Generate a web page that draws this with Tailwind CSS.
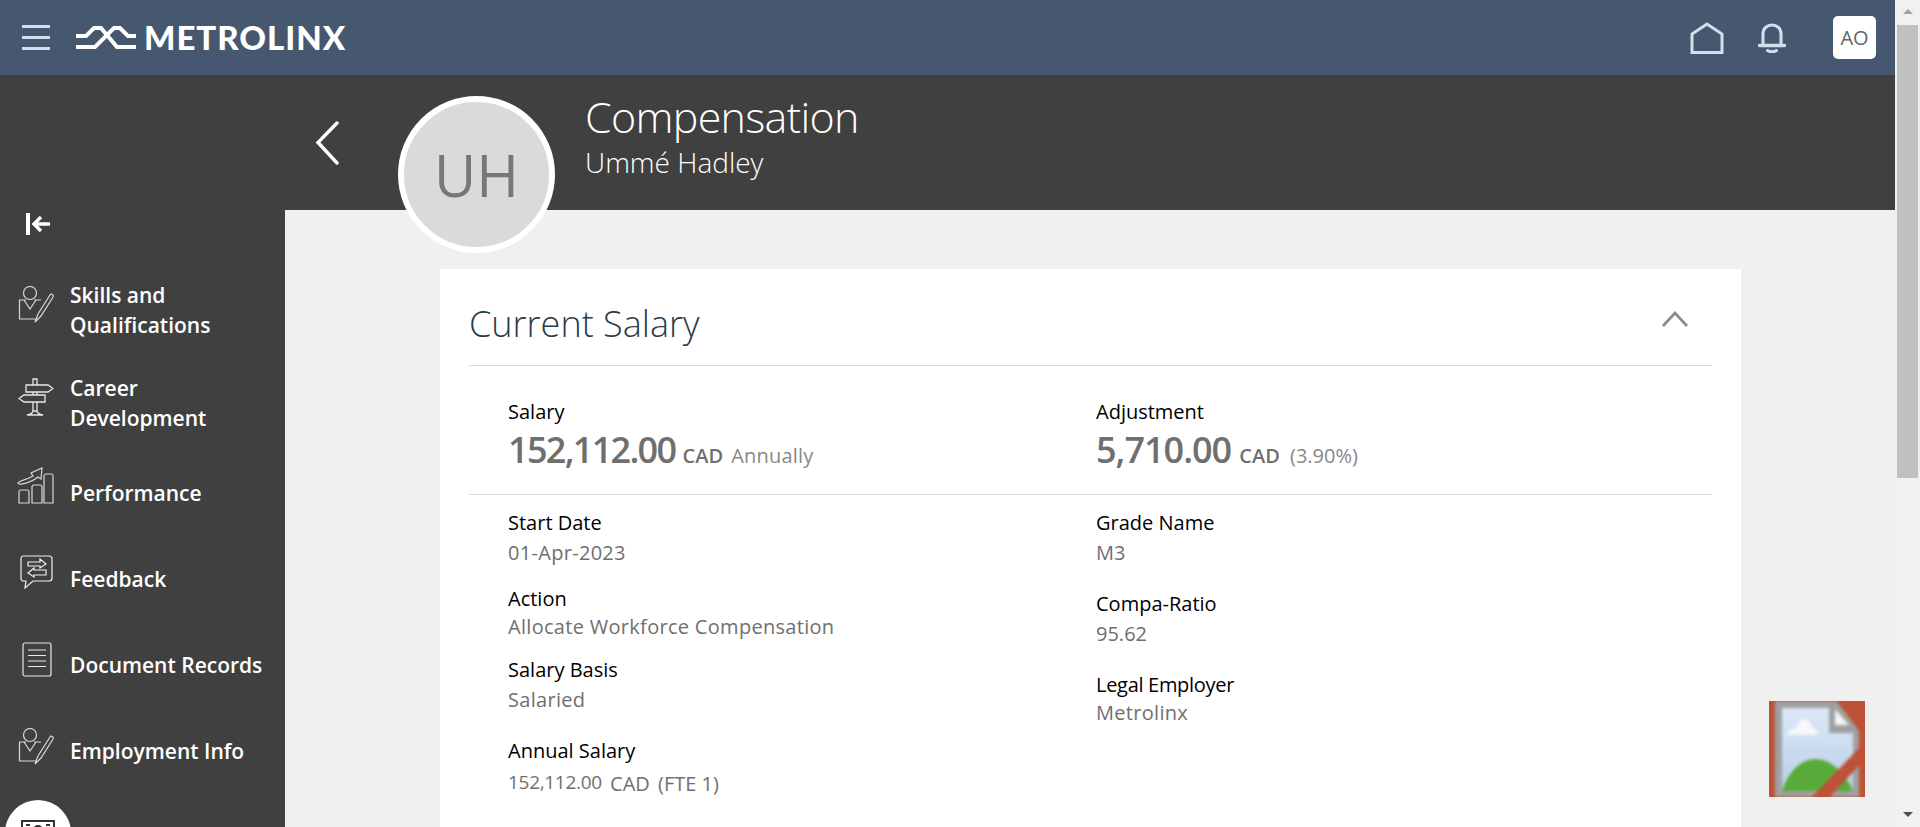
<!DOCTYPE html>
<html lang="en">
<head>
    <meta charset="UTF-8">
    <meta name="viewport" content="width=device-width, initial-scale=1.0">
    <title>Compensation</title>
    <script src="https://cdn.jsdelivr.net/npm/@tailwindcss/browser@4"></script>
</head>
<body class="h-screen overflow-hidden bg-[#f0f0f0] font-['Open_Sans','Noto_Sans',sans-serif]">
    <div class="flex h-[827px]">
        <div class="w-[1895px] h-full flex flex-col relative">
            <!-- Header -->
            <header class="h-[75px] shrink-0 bg-[#46586f] flex items-center">
                <button class="ml-[22px] w-[28px] flex flex-col gap-[8px]">
                    <span class="block h-[3px] bg-[#d3dfec]"></span>
                    <span class="block h-[3px] bg-[#d3dfec]"></span>
                    <span class="block h-[3px] bg-[#d3dfec]"></span>
                </button>
                <svg class="ml-[26px]" width="60" height="28" viewBox="0 0 60 28" fill="none" stroke="#fff" stroke-width="4">
                    <path d="M0 12H10L18 4H25L41 23H60"/>
                    <path d="M0 23H19L38 4H44L52 12H60"/>
                </svg>
                <span class="ml-[8px] text-[33px] leading-none font-black text-white font-['Lato',sans-serif] tracking-[1px]">METROLINX</span>
                <svg class="ml-auto" width="34" height="32" viewBox="0 0 34 32" fill="none" stroke="#d3dfec" stroke-width="3">
                    <path d="M2 30.5V12L17 2L32 12V30.5Z"/>
                </svg>
                <svg class="ml-[34px]" width="28" height="30" viewBox="0 0 28 30" fill="none" stroke="#d3dfec" stroke-width="3" stroke-linecap="round">
                    <path d="M5 21V11C5 5.5 9 2 14 2C19 2 23 5.5 23 11V21"/>
                    <path d="M1.5 22.5H26.5" stroke-width="3.4"/>
                    <path d="M9.5 27.5C12 29 16 29 18.5 27.5"/>
                </svg>
                <div class="ml-[47px] mr-[19px] w-[43px] h-[43px] rounded-[5px] bg-white text-[20px] text-[#666] flex items-center justify-center">AO</div>
            </header>

            <div class="flex-1 flex min-h-0">
                <!-- Sidebar -->
                <aside class="w-[285px] shrink-0 bg-[#404040] text-white relative overflow-hidden">
                    <svg class="absolute left-[26px] top-[137px]" width="25" height="24" viewBox="0 0 25 24" fill="none" stroke="#fff">
                        <path d="M2 1V23" stroke-width="4"/>
                        <path d="M24 12H9M15 5L8 12L15 19" stroke-width="3.4"/>
                    </svg>
                    <nav class="pt-[189px] text-[21px] font-semibold leading-[30px]">
                        <a class="h-[92px] flex items-center gap-[16px] pl-[18px]">
                            <svg class="shrink-0 -mt-[11px]" width="36" height="38" viewBox="0 0 36 38" fill="none" stroke="#d8d8d8" stroke-width="1.2">
                                <circle cx="12" cy="7" r="6.5"/>
                                <path d="M8 14H1.5V33H18M16 14H23M6 14L12 23L18 14"/>
                                <path d="M17 36L20 28L32 9C33 7 36 9 35 11L23 30Z"/>
                            </svg>
                            <span>Skills and<br>Qualifications</span>
                        </a>
                        <a class="h-[94px] flex items-center gap-[16px] pl-[18px]">
                            <svg class="shrink-0 -mt-[13px]" width="36" height="38" viewBox="0 0 36 38" fill="none" stroke="#e8e8e8" stroke-width="1.3">
                                <path d="M15 7V1H19V7M15 14V17M19 14V17M15 24V33M19 24V33"/>
                                <path d="M8 7H30L35 10.5L30 14H8Z"/>
                                <path d="M6 17H27V24H6L1 20.5Z"/>
                                <path d="M9 37C13 36 15 35 15 33H19C19 35 21 36 25 37Z"/>
                            </svg>
                            <span>Career<br>Development</span>
                        </a>
                        <a class="h-[86px] flex items-center gap-[16px] pl-[17px]">
                            <svg class="shrink-0 -mt-[16px]" width="37" height="37" viewBox="0 0 37 37" fill="none" stroke="#d8d8d8" stroke-width="1.2">
                                <path d="M2 36V25C2 24 3 23 4 23H10C11 23 12 24 12 25V36Z"/>
                                <path d="M15 36V20C15 19 16 18 17 18H23C24 18 25 19 25 20V36Z"/>
                                <path d="M27 36V9C27 8 28 7 29 7H35C36 7 36 8 36 9V36Z"/>
                                <path d="M1 16C1 14 9 13 16 9L14 6L25 1L24 12L21 10C14 16 1 19 1 16Z"/>
                            </svg>
                            <span>Performance</span>
                        </a>
                        <a class="h-[86px] flex items-center gap-[17px] pl-[20px]">
                            <svg class="shrink-0 -mt-[14px]" width="33" height="34" viewBox="0 0 33 34" fill="none" stroke="#f0f0f0" stroke-width="1.2">
                                <path d="M3 1H29C31 1 32 2 32 4V23C32 25 31 26 29 26H13L5 33L6 26H3C2 26 1 25 1 23V4C1 2 2 1 3 1Z"/>
                                <path d="M8 7H20V4L26 9L20 13V11H8Z"/>
                                <path d="M26 15H14V13L8 18L14 22V20H26Z"/>
                            </svg>
                            <span>Feedback</span>
                        </a>
                        <a class="h-[86px] flex items-center gap-[19px] pl-[22px]">
                            <svg class="shrink-0 -mt-[12px]" width="30" height="35" viewBox="0 0 30 35" fill="none" stroke="#e8e8e8" stroke-width="1.2">
                                <rect x="1" y="1" width="28" height="33" rx="2"/>
                                <path d="M6 8H24M6 13.5H24M6 19H24M6 24.5H24"/>
                            </svg>
                            <span class="-ml-[1px]">Document Records</span>
                        </a>
                        <a class="h-[86px] flex items-center gap-[16px] pl-[18px]">
                            <svg class="shrink-0 -mt-[9px]" width="36" height="38" viewBox="0 0 36 38" fill="none" stroke="#d8d8d8" stroke-width="1.2">
                                <circle cx="12" cy="7" r="6.5"/>
                                <path d="M8 14H1.5V33H18M16 14H23M6 14L12 23L18 14"/>
                                <path d="M17 36L20 28L32 9C33 7 36 9 35 11L23 30Z"/>
                            </svg>
                            <span>Employment Info</span>
                        </a>
                    </nav>
                    <div class="absolute left-[5px] top-[725px] w-[66px] h-[66px] rounded-full bg-white flex justify-center pt-[19px]">
                        <svg width="34" height="22" viewBox="0 0 34 22" fill="none" stroke="#333" stroke-width="2">
                            <rect x="1" y="2" width="32" height="18"/>
                            <circle cx="17" cy="11" r="4"/>
                            <path d="M5 6H9M25 6H29"/>
                        </svg>
                    </div>
                </aside>

                <!-- Main -->
                <main class="flex-1 min-w-0 flex flex-col relative">
                    <div class="h-[135px] shrink-0 bg-[#404040] flex items-start text-white">
                        <svg class="ml-[30px] mt-[45px]" width="25" height="45" viewBox="0 0 25 45" fill="none" stroke="#fff" stroke-width="3.4" stroke-linecap="round">
                            <path d="M22 3L3 22.5L22 43"/>
                        </svg>
                        <div class="ml-[245px] mt-[13px]">
                            <h1 class="text-[43px] leading-[58px] font-light tracking-[-0.7px]">Compensation</h1>
                            <p class="text-[28px] leading-[32px] font-light">Ummé Hadley</p>
                        </div>
                    </div>
                    <div class="absolute left-[113px] top-[21px] w-[157px] h-[157px] rounded-full border-[6px] border-white bg-[#dadada] text-[#777] text-[58px] flex items-center justify-center">UH</div>

                    <section class="ml-[155px] mr-[154px] mt-[59px] flex-1 bg-white px-[29px] overflow-hidden">
                        <div class="h-[97px] border-b border-[#d6dce3] flex items-center justify-between">
                            <h2 class="text-[36px] font-light text-[#2d3a48] mt-[14px]">Current Salary</h2>
                            <svg class="mr-[23px] mt-[4px]" width="28" height="18" viewBox="0 0 28 18" fill="none" stroke="#8a8a8a" stroke-width="2.6">
                                <path d="M2 16L14 3L26 16"/>
                            </svg>
                        </div>
                        <div class="h-[129px] border-b border-[#d6dce3] pl-[39px] grid grid-cols-[588px_1fr] pt-[31px]">
                            <div>
                                <p class="text-[20px] leading-[30px] text-black">Salary</p>
                                <p class="text-[#6f6f6f] leading-[50px] -mt-[2px]"><span class="text-[36px] font-semibold tracking-[-1.7px]">152,112.00</span> <span class="text-[20px] font-semibold ml-[3px]">CAD</span> <span class="text-[20px] text-[#888] font-medium ml-[4px] tracking-[0.2px]">Annually</span></p>
                            </div>
                            <div>
                                <p class="text-[20px] leading-[30px] text-black">Adjustment</p>
                                <p class="text-[#6f6f6f] leading-[50px] -mt-[2px]"><span class="text-[36px] font-semibold tracking-[-1px]">5,710.00</span> <span class="text-[20px] font-semibold ml-[4px]">CAD</span> <span class="text-[20px] text-[#888] ml-[6px]">(3.90%)</span></p>
                            </div>
                        </div>
                        <div class="pl-[39px] pt-[13px] grid grid-cols-[588px_1fr] text-[20px] leading-[30px]">
                            <div>
                                <p class="text-black">Start Date</p>
                                <p class="text-[#6f6f6f] font-medium tracking-[0.3px]">01-Apr-2023</p>
                                <p class="text-black mt-[16px]">Action</p>
                                <p class="text-[#6f6f6f] font-medium tracking-[0.3px] -mt-[2px]">Allocate Workforce Compensation</p>
                                <p class="text-black mt-[13px]">Salary Basis</p>
                                <p class="text-[#6f6f6f] font-medium tracking-[0.3px]">Salaried</p>
                                <p class="text-black mt-[21px]">Annual Salary</p>
                                <p class="text-[#6f6f6f] font-medium mt-[1px]"><span class="text-[19px] tracking-[-0.3px]">152,112.00</span> <span class="ml-[3px] relative top-[2px]">CAD</span> <span class="ml-[3px] relative top-[2px]">(FTE 1)</span></p>
                            </div>
                            <div>
                                <p class="text-black">Grade Name</p>
                                <p class="text-[#6f6f6f] font-medium">M3</p>
                                <p class="text-black mt-[21px]">Compa-Ratio</p>
                                <p class="text-[#6f6f6f] font-medium">95.62</p>
                                <p class="text-black mt-[21px] tracking-[-0.3px]">Legal Employer</p>
                                <p class="text-[#6f6f6f] font-medium tracking-[0.3px] -mt-[2px]">Metrolinx</p>
                            </div>
                        </div>
                    </section>

                    <!-- broken image placeholder -->
                    <div class="absolute left-[1484px] top-[626px] w-[96px] h-[96px] bg-[#bd5238] overflow-hidden">
                        <svg class="blur-[1.5px]" width="96" height="96" viewBox="0 0 96 96">
                            <defs>
                                <linearGradient id="sky" x1="0" y1="0" x2="0" y2="1">
                                    <stop offset="0" stop-color="#dbe8f9"/>
                                    <stop offset="1" stop-color="#b9cde8"/>
                                </linearGradient>
                            </defs>
                            <rect width="96" height="96" fill="#bd5238"/>
                            <path d="M6 -2H68L90 24V98H6Z" fill="#a0a0a0"/>
                            <path d="M13 7H60V32H84V90H13Z" fill="url(#sky)"/>
                            <path d="M18 33C19 28 26 28 28 26C30 16 42 16 42 25C46 27 49 29 49 34H18Z" fill="#f6f8fb"/>
                            <path d="M13 90C20 68 34 58 47 58C62 58 76 72 84 90Z" fill="#58ab38"/>
                            <path d="M66 8L80 24H66Z" fill="#f5f5f5"/>
                            <path d="M66 -2H98V30H90Z" fill="#bd5238"/>
                            <path d="M41 98L90 47L98 47V56L59 98Z" fill="#bd5238"/>
                        </svg>
                    </div>
                </main>
            </div>
        </div>

        <!-- Scrollbar -->
        <div class="w-[25px] shrink-0 h-full bg-[#f1f1f1] relative">
            <div class="absolute left-[8px] top-[9px] w-0 h-0 border-x-[5px] border-x-transparent border-b-[5px] border-b-[#a3a3a3]"></div>
            <div class="absolute left-[2px] top-[25px] w-[21px] h-[453px] bg-[#c1c1c1]"></div>
            <div class="absolute left-[8px] top-[812px] w-0 h-0 border-x-[5px] border-x-transparent border-t-[5px] border-t-[#505050]"></div>
        </div>
    </div>
</body>
</html>
